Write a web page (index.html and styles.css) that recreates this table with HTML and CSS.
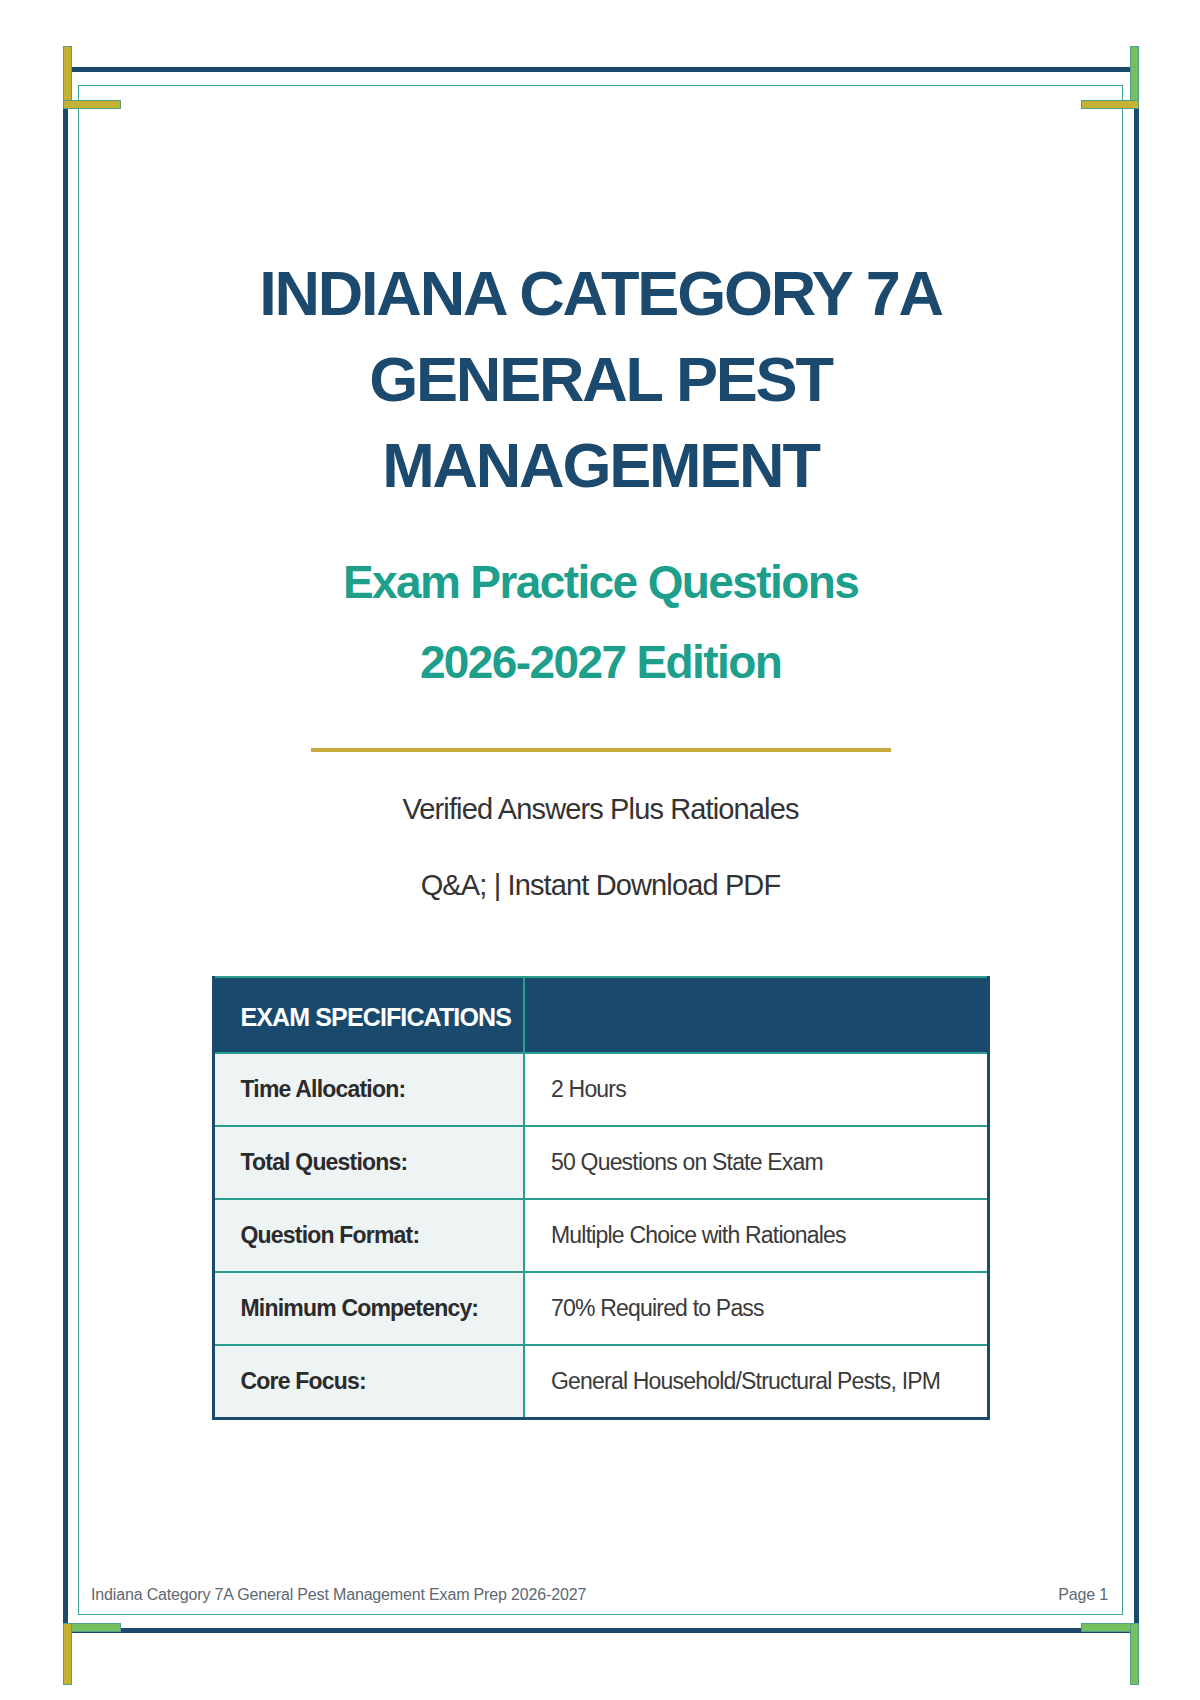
FILE: index.html
```html
<!DOCTYPE html>
<html lang="en">
<head>
<meta charset="utf-8">
<title>Indiana Category 7A General Pest Management</title>
<link rel="stylesheet" href="styles.css">
</head>
<body>
<div class="page">
  <span class="bar v gold tl-v"></span>
  <span class="bar h gold tl-h"></span>
  <span class="bar v green tr-v"></span>
  <span class="bar h gold tr-h"></span>
  <span class="bar h green bl-h"></span>
  <span class="bar v gold bl-v"></span>
  <span class="bar h green br-h"></span>
  <span class="bar v green br-v"></span>
  <div class="inner">
    <h1 class="title">INDIANA CATEGORY 7A<br>GENERAL PEST<br>MANAGEMENT</h1>
    <div class="subtitle">
      <p>Exam Practice Questions</p>
      <p>2026-2027 Edition</p>
    </div>
    <hr class="rule">
    <p class="tagline first">Verified Answers Plus Rationales</p>
    <p class="tagline">Q&amp;A; | Instant Download PDF</p>
    <table class="specs">
      <thead>
        <tr><th class="label-col">EXAM SPECIFICATIONS</th><th></th></tr>
      </thead>
      <tbody>
        <tr><td class="label">Time Allocation:</td><td class="value">2 Hours</td></tr>
        <tr><td class="label">Total Questions:</td><td class="value">50 Questions on State Exam</td></tr>
        <tr><td class="label">Question Format:</td><td class="value">Multiple Choice with Rationales</td></tr>
        <tr><td class="label">Minimum Competency:</td><td class="value">70% Required to Pass</td></tr>
        <tr><td class="label">Core Focus:</td><td class="value">General Household/Structural Pests, IPM</td></tr>
      </tbody>
    </table>
    <div class="footer">
      <span>Indiana Category 7A General Pest Management Exam Prep 2026-2027</span>
      <span>Page 1</span>
    </div>
  </div>
</div>
</body>
</html>
```

FILE: styles.css
```css
html, body {
  margin: 0;
  padding: 0;
  background: #ffffff;
}

body {
  font-family: "Liberation Sans", Arial, Helvetica, sans-serif;
  min-height: 1700px;
  padding-top: 67px;
  box-sizing: border-box;
}

.page {
  position: relative;
  box-sizing: border-box;
  width: 1076px;
  height: 1566px;
  margin: 0 0 67px 63px;
  border: 5px solid #1b4a6c;
  padding: 13px 11px 13px 10px;
}

.inner {
  box-sizing: border-box;
  height: 100%;
  border: 1.5px solid #3aa597;
  display: flex;
  flex-direction: column;
  align-items: center;
  padding-top: 164px;
}

/* corner ornaments */
.bar {
  position: absolute;
  box-sizing: border-box;
  border: 1px solid #4f9f8a;
  z-index: 2;
}
.bar.v { width: 9px; height: 62px; }
.bar.h { width: 58px; height: 9px; }
.gold { background: #c6b232; }
.green { background: #76bf5e; }

.tl-v { left: -5px; top: -26px; }
.tl-h { left: -5px; top: 28px; }
.tr-v { right: -5px; top: -26px; }
.tr-h { right: -5px; top: 28px; }
.bl-h { left: -5px; bottom: -4px; }
.bl-v { left: -5px; bottom: -57px; }
.br-h { right: -5px; bottom: -4px; }
.br-v { right: -5px; bottom: -57px; }

.title {
  margin: 0;
  font-size: 63px;
  line-height: 86px;
  font-weight: 700;
  letter-spacing: -0.035em;
  color: #1b4a6e;
  text-align: center;
}

.subtitle {
  margin-top: 34px;
  text-align: center;
}
.subtitle p {
  margin: 0;
  font-size: 46px;
  line-height: 80px;
  font-weight: 700;
  letter-spacing: -0.035em;
  color: #1d9f8b;
}

.rule {
  width: 580px;
  height: 4px;
  margin: 46px 0 0;
  border: none;
  background: #c9aa3c;
}

.tagline {
  margin: 36px 0 0;
  font-size: 29px;
  line-height: 40px;
  letter-spacing: -0.03em;
  color: #333333;
  text-align: center;
}
.tagline.first { margin-top: 37px; }

.specs {
  margin-top: 71px;
  width: 778px;
  border-collapse: collapse;
  border: 3px solid #1b4a6c;
  border-top: 1px solid #3aa597;
  table-layout: fixed;
}

.specs th,
.specs td {
  box-sizing: border-box;
  text-align: left;
  padding: 0 0 0 26px;
  border: 2px solid #2a9d8f;
}

.specs th {
  height: 76px;
  background: #194a6e;
  color: #ffffff;
  font-size: 25px;
  font-weight: 700;
  letter-spacing: -0.035em;
  padding-top: 4px;
}
.specs .label-col { width: 311px; }

.specs td {
  height: 73px;
  font-size: 23px;
  letter-spacing: -0.035em;
}

.specs .label {
  background: #eef3f4;
  color: #2b2b2b;
  font-weight: 700;
}
.specs .value {
  background: #ffffff;
  color: #3a3a3a;
}

.footer {
  margin-top: auto;
  margin-bottom: 9px;
  align-self: stretch;
  display: flex;
  justify-content: space-between;
  padding: 0 14px 0 12px;
  font-size: 16px;
  line-height: 20px;
  letter-spacing: -0.01em;
  color: #5d6873;
}
```
